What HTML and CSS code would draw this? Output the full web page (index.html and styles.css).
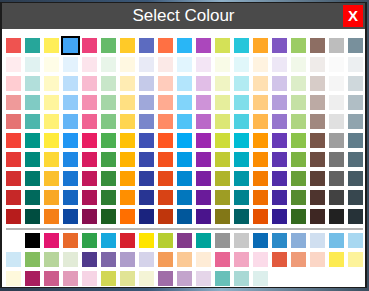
FILE: index.html
```html
<!DOCTYPE html>
<html lang="en">
<head>
  <meta charset="UTF-8" />
  <meta name="viewport" content="width=device-width, initial-scale=1.0" />
  <title>Select Colour</title>
  <link rel="stylesheet" href="styles.css">
</head>
<body>
  <div class="dialog">
    <div class="titlebar">
      <span></span>
      <span class="title">Select Colour</span>
      <button class="close-btn">X</button>
    </div>
    <div class="swatches" id="mainGrid"></div>
    <div class="divider"></div>
    <div class="swatches extra" id="extraGrid"></div>
  </div>

  <script>
    // material palette, one column per hue: 400, 50, 100, 200, 300, 500, 600, 700, 800, 900
    const hues = [
      ["#ef5350","#ffebee","#ffcdd2","#ef9a9a","#e57373","#f44336","#e53935","#d32f2f","#c62828","#b71c1c"],
      ["#26a69a","#e0f2f1","#b2dfdb","#80cbc4","#4db6ac","#009688","#00897b","#00796b","#00695c","#004d40"],
      ["#ffee58","#fffde7","#fff9c4","#fff59d","#fff176","#ffeb3b","#fdd835","#fbc02d","#f9a825","#f57f17"],
      ["#42a5f5","#e3f2fd","#bbdefb","#90caf9","#64b5f6","#2196f3","#1e88e5","#1976d2","#1565c0","#0d47a1"],
      ["#ec407a","#fce4ec","#f8bbd0","#f48fb1","#f06292","#e91e63","#d81b60","#c2185b","#ad1457","#880e4f"],
      ["#66bb6a","#e8f5e9","#c8e6c9","#a5d6a7","#81c784","#4caf50","#43a047","#388e3c","#2e7d32","#1b5e20"],
      ["#ffca28","#fff8e1","#ffecb3","#ffe082","#ffd54f","#ffc107","#ffb300","#ffa000","#ff8f00","#ff6f00"],
      ["#5c6bc0","#e8eaf6","#c5cae9","#9fa8da","#7986cb","#3f51b5","#3949ab","#303f9f","#283593","#1a237e"],
      ["#ff7043","#fbe9e7","#ffccbc","#ffab91","#ff8a65","#ff5722","#f4511e","#e64a19","#d84315","#bf360c"],
      ["#29b6f6","#e1f5fe","#b3e5fc","#81d4fa","#4fc3f7","#03a9f4","#039be5","#0288d1","#0277bd","#01579b"],
      ["#ab47bc","#f3e5f5","#e1bee7","#ce93d8","#ba68c8","#9c27b0","#8e24aa","#7b1fa2","#6a1b9a","#4a148c"],
      ["#d4e157","#f9fbe7","#f0f4c3","#e6ee9c","#dce775","#cddc39","#c0ca33","#afb42b","#9e9d24","#827717"],
      ["#26c6da","#e0f7fa","#b2ebf2","#80deea","#4dd0e1","#00bcd4","#00acc1","#0097a7","#00838f","#006064"],
      ["#ffa726","#fff3e0","#ffe0b2","#ffcc80","#ffb74d","#ff9800","#fb8c00","#f57c00","#ef6c00","#e65100"],
      ["#7e57c2","#ede7f6","#d1c4e9","#b39ddb","#9575cd","#673ab7","#5e35b1","#512da8","#4527a0","#311b92"],
      ["#9ccc65","#f1f8e9","#dcedc8","#c5e1a5","#aed581","#8bc34a","#7cb342","#689f38","#558b2f","#33691e"],
      ["#8d6e63","#efebe9","#d7ccc8","#bcaaa4","#a1887f","#795548","#6d4c41","#5d4037","#4e342e","#3e2723"],
      ["#bdbdbd","#fafafa","#f5f5f5","#eeeeee","#e0e0e0","#9e9e9e","#757575","#616161","#424242","#212121"],
      ["#78909c","#eceff1","#cfd8dc","#b0bec5","#90a4ae","#607d8b","#546e7a","#455a64","#37474f","#263238"]
    ];

    const extras = [
      "#ffffff","#000000","#e3166f","#e8692a","#2ea24a","#15a8dd","#d7202e","#ffe500","#b6ce30","#833b8a",
      "#00a39a","#959595","#c8c8c8","#0a6bb5","#2b8ac8","#8aaed9","#d0dff0","#73bee7","#a8d8f1",
      "#cce7f6","#84bd5f","#b7d59b","#e2ebd7","#503a8c","#7d66a8","#ae9dcb","#d5d3ea","#f49c58","#fbc995",
      "#feecd6","#e86594","#f2a6c2","#fbdbe9","#e25a3e","#ef9b78","#fbd6c6","#fdeb52","#fdf39b",
      "#fef9dc","#a91e5f","#cc5c8c","#e29bb9","#f6d4e5","#d2d755","#e1e495","#f4f4d6","#a06da8","#c3a4cc",
      "#e5d5e9","#68c0b9","#a9d9d5","#dcefec"
    ];

    const selected = "#42a5f5";

    function addSwatch(grid, colour) {
      const el = document.createElement("span");
      el.className = "swatch";
      if (colour === selected) el.classList.add("selected");
      el.style.backgroundColor = colour;
      grid.appendChild(el);
    }

    const mainGrid = document.getElementById("mainGrid");
    for (let row = 0; row < 10; row++) {
      hues.forEach(h => addSwatch(mainGrid, h[row]));
    }

    const extraGrid = document.getElementById("extraGrid");
    extras.forEach(c => addSwatch(extraGrid, c));
  </script>
</body>
</html>
```

FILE: styles.css
```css
html, body {
  height: 100%;
}
body {
  margin: 0;
  padding-top: 2px;
  box-sizing: border-box;
  font-family: "Liberation Sans", Arial, sans-serif;
  background: linear-gradient(90deg, #2d3c4e 0%, #3b5878 40%, #8fb0c8 60%, #3a4d5e 100%);
}
.dialog {
  width: 367px;
  box-sizing: border-box;
  background-color: #fff;
  border: 1px solid #1c1c1c;
  border-left-width: 2px;
  border-right-width: 2px;
  padding-bottom: 1px;
}
.titlebar {
  display: grid;
  grid-template-columns: 22px 1fr 22px;
  align-items: center;
  height: 26px;
  background-color: #4a4a4a;
}
.title {
  text-align: center;
  color: #fff;
  font-size: 17px;
}
.close-btn {
  width: 20px;
  height: 22px;
  padding: 0;
  border: none;
  background-color: #ff0000;
  color: #fff;
  font-family: "Liberation Sans", Arial, sans-serif;
  font-weight: bold;
  font-size: 15px;
  line-height: 22px;
  cursor: pointer;
}
.swatches {
  display: grid;
  grid-template-columns: repeat(19, 15px);
  gap: 4px;
  padding: 9px 2px 0 4px;
}
.swatches.extra {
  padding-top: 3px;
}
.swatch {
  display: block;
  width: 15px;
  height: 15px;
  cursor: pointer;
}
.swatch.selected {
  outline: 2px solid #000;
}
.divider {
  height: 2px;
  margin: 4px 2px 0 4px;
  background-color: #b4b4b4;
}
```
